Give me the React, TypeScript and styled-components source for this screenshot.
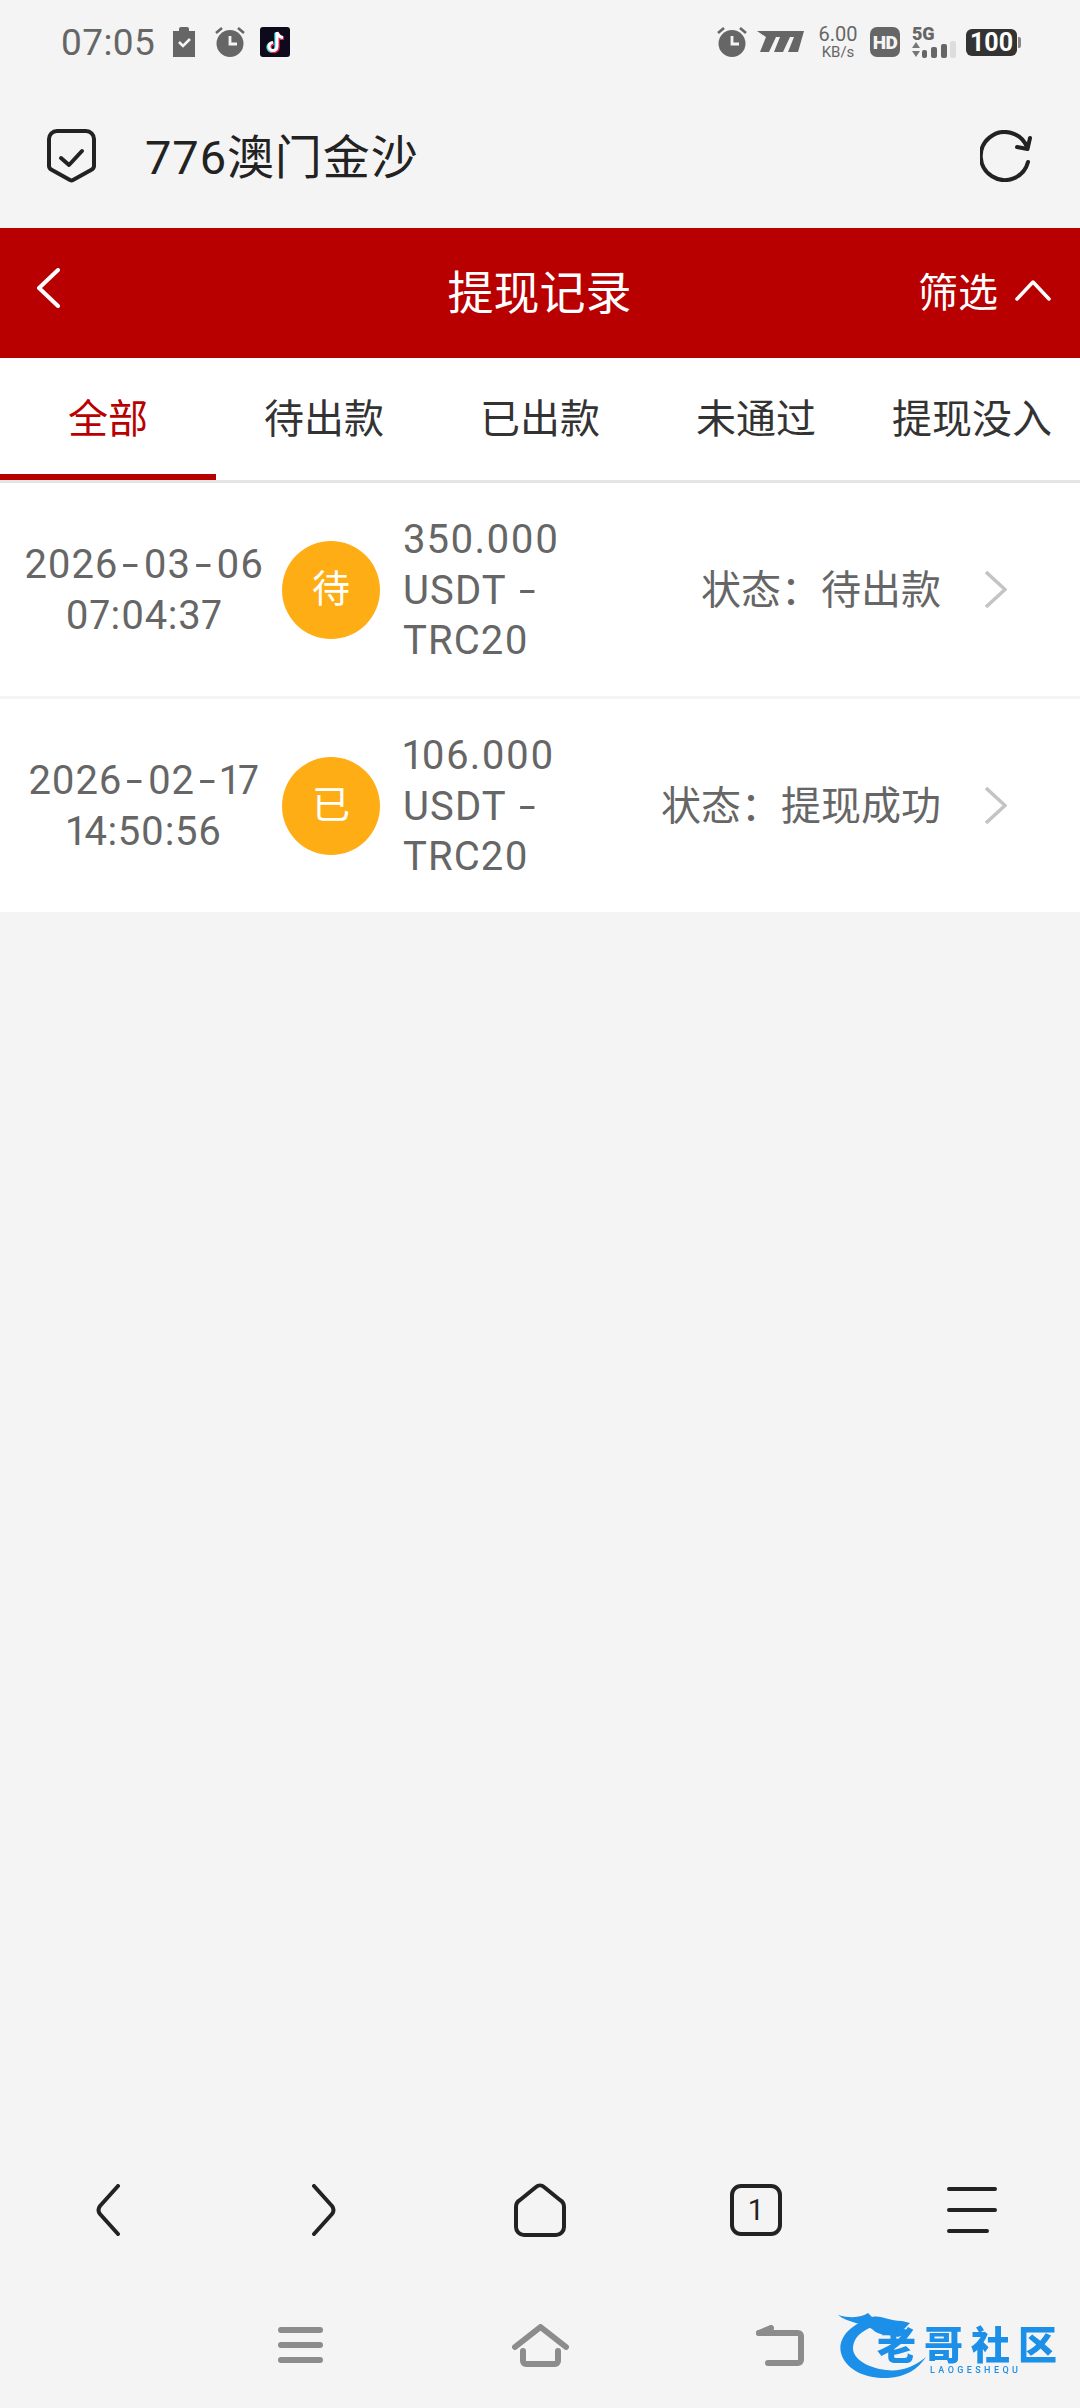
import styled, { createGlobalStyle } from "styled-components";

const GlobalStyle = createGlobalStyle`
  html, body {
    margin: 0;
    padding: 0;
    background: #f4f4f4;
  }
  * {
    box-sizing: border-box;
  }
`;

const FONT = `Roboto, "Noto Sans CJK SC", sans-serif`;
const RED = "#b90000";

const records = [
  { date: "2026-03-06", time: "07:04:37", mark: "待", amount: "350.000", status: "待出款" },
  { date: "2026-02-17", time: "14:50:56", mark: "已", amount: "106.000", status: "提现成功" },
];

const tabs = ["全部", "待出款", "已出款", "未通过", "提现没入"];

const Page = styled.div`
  position: relative;
  width: 1080px;
  height: 2408px;
  display: flex;
  flex-direction: column;
  background: #f4f4f4;
  font-family: ${FONT};
  overflow: hidden;
`;

const StatusBar = styled.div`
  height: 84px;
  padding: 0 59px 0 61px;
  display: flex;
  justify-content: space-between;
  align-items: center;
  color: #666;
`;

const StatusGroup = styled.div`
  display: flex;
  align-items: center;
`;

const Clock = styled.span`
  font-size: 37px;
  width: 112px;
  letter-spacing: 0.4px;
`;

const Speed = styled.div`
  width: 38px;
  margin: 0 13px 0 15px;
  display: flex;
  flex-direction: column;
  align-items: center;
  line-height: 1;
  font-size: 20px;
  color: #666;

  small {
    font-size: 15px;
    margin-top: 1px;
  }
`;

const HdBadge = styled.div`
  width: 30px;
  height: 30px;
  margin-right: 12px;
  border-radius: 7px;
  background: #666;
  color: #f4f4f4;
  font-size: 19px;
  font-weight: 900;
  letter-spacing: -0.5px;
  display: flex;
  align-items: center;
  justify-content: center;
`;

const Network = styled.div`
  width: 44px;
  display: flex;
  flex-direction: column;
  font-size: 18px;
  line-height: 14px;
  font-weight: 900;
  letter-spacing: -0.3px;
  color: #666;
`;

const Battery = styled.div`
  width: 51px;
  height: 27px;
  margin: 0 4px 0 10px;
  border-radius: 6px;
  background: #333;
  color: #fff;
  font-size: 25px;
  font-weight: 700;
  display: flex;
  align-items: center;
  justify-content: center;
  position: relative;

  &::after {
    content: "";
    position: absolute;
    right: -4px;
    top: 8px;
    width: 3px;
    height: 11px;
    background: #888;
    border-radius: 0 2px 2px 0;
  }
`;

const AddressBar = styled.div`
  height: 144px;
  padding: 0 48px 0 47px;
  display: flex;
  align-items: center;
  color: #222;
`;

const SiteName = styled.div`
  flex: 1;
  margin: 2px 0 0 49px;
  font-size: 47px;
  line-height: 1;
  letter-spacing: 0.9px;
`;

const Header = styled.div`
  height: 130px;
  padding: 0 29px 0 28px;
  display: grid;
  grid-template-columns: 1fr auto 1fr;
  align-items: center;
  background: ${RED};
  color: #fff;
`;

const Title = styled.div`
  font-size: 46px;
  margin-bottom: 8px;
`;

const BackButton = styled.div`
  display: flex;
  align-items: center;
  margin: 0 0 10px 8px;
`;

const FilterButton = styled.div`
  display: flex;
  justify-content: flex-end;
  align-items: center;
  gap: 17px;
  font-size: 40px;
  margin-bottom: 6px;
`;

const TabRow = styled.div`
  display: grid;
  grid-template-columns: repeat(5, 216px);
  background: #fff;
  border-bottom: 3px solid #e5e5e5;
`;

const Tab = styled.div<{ $active?: boolean }>`
  height: 122px;
  display: flex;
  align-items: center;
  justify-content: center;
  font-size: 40px;
  color: ${(p) => (p.$active ? RED : "#333")};
  border-bottom: 6px solid ${(p) => (p.$active ? RED : "transparent")};
`;

const Row = styled.div`
  height: 213px;
  padding-right: 73px;
  display: flex;
  align-items: center;
  background: #fff;
  color: #666;
  font-size: 40px;
  line-height: 50.7px;
  font-variant-numeric: proportional-nums;

  & + & {
    margin-top: 3px;
  }
`;

const DateCol = styled.div`
  width: 276px;
  padding: 2px 0 0 12px;
  text-align: center;
  letter-spacing: 0.6px;
  white-space: nowrap;
`;

// the hyphens in the reference run much wider than Roboto's
const Dash = styled.span`
  display: inline-block;
  margin: 0 7px;
  transform: scaleX(1.5);
`;

const CoinDash = styled(Dash)`
  margin: 0 0 0 5px;
`;

const Mark = styled.div`
  width: 98px;
  height: 98px;
  margin: 0 23px 0 6px;
  flex: none;
  border-radius: 50%;
  background: #ffad14;
  color: #fff;
  font-size: 38px;
  display: flex;
  align-items: center;
  justify-content: center;
`;

const AmountCol = styled.div`
  width: 172px;
  padding-top: 3px;
  letter-spacing: 1.1px;
`;

const StatusText = styled.div`
  flex: 1;
  padding-top: 3px;
  margin-right: 44px;
  text-align: right;
`;

const Spacer = styled.div`
  flex: 1;
`;

const BrowserNav = styled.div`
  height: 96px;
  margin-bottom: 55px;
  display: grid;
  grid-template-columns: repeat(5, 216px);
  align-items: center;
  justify-items: center;
  color: #222;
`;

const TabCount = styled.div`
  width: 52px;
  height: 52px;
  border: 4px solid #222;
  border-radius: 11px;
  font-size: 29px;
  color: #222;
  display: flex;
  align-items: center;
  justify-content: center;
`;

const SystemNav = styled.div`
  height: 64px;
  margin-bottom: 31px;
  padding: 0 180px;
  display: grid;
  grid-template-columns: repeat(3, 240px);
  align-items: center;
  justify-items: center;
  color: #8c8c8c;
`;

const Watermark = styled.div`
  position: absolute;
  left: 838px;
  top: 2307px;
  width: 222px;
  height: 71px;
  color: #1c8fe8;
  filter: blur(0.4px);

  svg {
    position: absolute;
    left: 0;
    top: 0;
  }
`;

const WatermarkName = styled.div`
  position: absolute;
  left: 39px;
  top: 21px;
  font-size: 39px;
  line-height: 37px;
  font-weight: 900;
  letter-spacing: 8px;
  white-space: nowrap;
`;

const WatermarkSub = styled.div`
  position: absolute;
  left: 92px;
  top: 58px;
  font-size: 9px;
  line-height: 10px;
  letter-spacing: 3.4px;
  font-weight: 500;
  white-space: nowrap;
`;

const ClipboardIcon = () => (
  <svg width="22" height="30" viewBox="0 0 22 30" style={{ marginRight: 20 }}>
    <path d="M0 4h6V2a2 2 0 0 1 2-2h6a2 2 0 0 1 2 2v2h6v26H0z" fill="#666" />
    <path d="M6 15l4 4 7-7" fill="none" stroke="#f4f4f4" strokeWidth="2.6" />
  </svg>
);

const AlarmIcon = () => (
  <svg width="30" height="30" viewBox="0 0 30 30">
    <circle cx="15" cy="16.500" r="13.500" fill="#666" />
    <path d="M1 6l6-5M29 6l-6-5" stroke="#666" strokeWidth="2.600" />
    <path d="M15 9v8h7" fill="none" stroke="#f4f4f4" strokeWidth="2.800" />
  </svg>
);

const TiktokIcon = () => (
  <svg width="30" height="30" viewBox="0 0 30 30" style={{ marginLeft: 15 }}>
    <rect width="30" height="30" rx="3" fill="#0e0a1c" />
    <path d="M17 5v14.500a4 4 0 1 1-4-4M17 5c.5 3 3 5 6 5.500" fill="none" stroke="#2be0e4" strokeWidth="3.400" transform="translate(-1 .8)" />
    <path d="M17 5v14.500a4 4 0 1 1-4-4M17 5c.5 3 3 5 6 5.500" fill="none" stroke="#f0244f" strokeWidth="3.400" transform="translate(1 1)" />
    <path d="M17 5v14.500a4 4 0 1 1-4-4M17 5c.5 3 3 5 6 5.500" fill="none" stroke="#fff" strokeWidth="3" />
  </svg>
);

const CarrierIcon = () => (
  <svg width="47" height="22" viewBox="0 0 47 22" style={{ marginLeft: 10 }}>
    <path d="M0 0h47l-6 21H31l6-15h-4l-7 15h-9l6-15h-4l-7 15H3l6-15z" fill="#666" />
  </svg>
);

const SignalIcon = () => (
  <svg width="44" height="17" viewBox="0 0 44 17">
    <path d="M4 1l4 6H0zM0 10h8l-4 6z" fill="#777" />
    <rect x="10" y="9" width="5" height="8" rx="2" fill="#666" />
    <rect x="19" y="6" width="6" height="11" rx="2" fill="#666" />
    <rect x="29" y="3" width="6" height="14" rx="2" fill="#666" />
    <rect x="38" y="0" width="6" height="17" rx="2" fill="#ddd" />
  </svg>
);

const ShieldIcon = () => (
  <svg width="49" height="54" viewBox="0 0 49 54" fill="none" stroke="#222" strokeWidth="4" strokeLinejoin="round" strokeLinecap="round">
    <path d="M10 2h29a8 8 0 0 1 8 8v27c0 2-1 3-3 4L26 51a3 3 0 0 1-3 0L5 41c-2-1-3-2-3-4V10a8 8 0 0 1 8-8z" />
    <path d="M14 29l8 7 13-14" />
  </svg>
);

const RefreshIcon = () => (
  <svg width="52" height="52" viewBox="0 0 52 52" fill="none" stroke="#222" strokeWidth="4" strokeLinecap="round" strokeLinejoin="round">
    <path d="M48 32A24 24 0 1 1 47 17" />
    <path d="M50 8l-2.500 11L37 17" />
  </svg>
);

const BackIcon = () => (
  <svg width="24" height="40" viewBox="0 0 24 40" fill="none" stroke="#fff" strokeWidth="4" strokeLinecap="round" strokeLinejoin="round">
    <path d="M22 2L3 20l19 18" />
  </svg>
);

const UpIcon = () => (
  <svg width="36" height="21" viewBox="0 0 36 21" fill="none" stroke="#fff" strokeWidth="3.500" strokeLinecap="round" strokeLinejoin="round">
    <path d="M2 19L18 2l16 17" />
  </svg>
);

const RowArrow = () => (
  <svg width="22" height="37" viewBox="0 0 22 37" fill="none" stroke="#c4c4c4" strokeWidth="3.500">
    <path d="M1 1l19 17.500L1 36" />
  </svg>
);

const NavPrev = () => (
  <svg width="24" height="52" viewBox="0 0 24 52" fill="none" stroke="#222" strokeWidth="4" strokeLinecap="round" strokeLinejoin="round">
    <path d="M22 2L4 22q-3 4 0 8l18 20" />
  </svg>
);

const NavNext = () => (
  <svg width="24" height="52" viewBox="0 0 24 52" fill="none" stroke="#222" strokeWidth="4" strokeLinecap="round" strokeLinejoin="round">
    <path d="M2 2l18 20q3 4 0 8L2 50" />
  </svg>
);

const NavHome = () => (
  <svg width="52" height="54" viewBox="0 0 52 54" fill="none" stroke="#222" strokeWidth="4" strokeLinejoin="round">
    <path d="M22 4a6 6 0 0 1 8 0l16 13a8 8 0 0 1 4 7v20a8 8 0 0 1-8 8H10a8 8 0 0 1-8-8V24a8 8 0 0 1 4-7z" />
  </svg>
);

const NavMenu = () => (
  <svg width="50" height="46" viewBox="0 0 50 46" fill="none" stroke="#222" strokeWidth="4" strokeLinecap="round">
    <path d="M2 2h46M2 23h46M2 44h38" />
  </svg>
);

const SysMenu = () => (
  <svg width="45" height="36" viewBox="0 0 45 36" fill="none" stroke="#8c8c8c" strokeWidth="6" strokeLinecap="round">
    <path d="M3 3h39M3 18h39M3 33h39" />
  </svg>
);

const SysHome = () => (
  <svg width="57" height="43" viewBox="0 0 57 43" fill="none" stroke="#8c8c8c" strokeWidth="6" strokeLinecap="round" strokeLinejoin="round">
    <path d="M3 23L28.500 3 54 23" />
    <path d="M11 27v10a3 3 0 0 0 3 3h29a3 3 0 0 0 3-3V27" />
  </svg>
);

const SysBack = () => (
  <svg width="48" height="41" viewBox="0 0 48 41" fill="none" stroke="#8c8c8c" strokeWidth="6" strokeLinecap="round" strokeLinejoin="round">
    <path d="M3 8h39a3 3 0 0 1 3 3v24a3 3 0 0 1-3 3H12" />
    <path d="M3 8l12-5" />
  </svg>
);

const DragonLogo = () => (
  <svg width="222" height="71" viewBox="0 0 222 71" fill="#1c8fe8">
    <path d="M30 12C8 20 0 34 3 46c5 18 27 26 47 25 18-1 30-9 38-21-12 10-26 15-40 13-18-2-34-11-33-23 1-10 9-16 19-20z" />
    <path d="M0 8c14 4 24 2 30-2l4 4c10-2 16 4 30 4l8 2-6 6 8 2-14 6c-12-4-18 0-26-8C24 16 10 16 0 8z" />
  </svg>
);

const splitDate = (date: string) =>
  date.split("-").map((part, i) => (
    <span key={part + i}>
      {i > 0 && <Dash>-</Dash>}
      {part}
    </span>
  ));

export default function App() {
  return (
    <Page>
      <GlobalStyle />
      <StatusBar>
        <StatusGroup>
          <Clock>07:05</Clock>
          <ClipboardIcon />
          <AlarmIcon />
          <TiktokIcon />
        </StatusGroup>
        <StatusGroup>
          <AlarmIcon />
          <CarrierIcon />
          <Speed>
            6.00
            <small>KB/s</small>
          </Speed>
          <HdBadge>HD</HdBadge>
          <Network>
            5G
            <SignalIcon />
          </Network>
          <Battery>100</Battery>
        </StatusGroup>
      </StatusBar>

      <AddressBar>
        <ShieldIcon />
        <SiteName>776澳门金沙</SiteName>
        <RefreshIcon />
      </AddressBar>

      <Header>
        <BackButton>
          <BackIcon />
        </BackButton>
        <Title>提现记录</Title>
        <FilterButton>
          筛选
          <UpIcon />
        </FilterButton>
      </Header>

      <TabRow>
        {tabs.map((t, i) => (
          <Tab key={t} $active={i === 0}>
            {t}
          </Tab>
        ))}
      </TabRow>

      {records.map((r) => (
        <Row key={r.date}>
          <DateCol>
            {splitDate(r.date)}
            <br />
            {r.time}
          </DateCol>
          <Mark>{r.mark}</Mark>
          <AmountCol>
            {r.amount} USDT <CoinDash>-</CoinDash> TRC20
          </AmountCol>
          <StatusText>状态：{r.status}</StatusText>
          <RowArrow />
        </Row>
      ))}

      <Spacer />

      <BrowserNav>
        <NavPrev />
        <NavNext />
        <NavHome />
        <TabCount>1</TabCount>
        <NavMenu />
      </BrowserNav>

      <SystemNav>
        <SysMenu />
        <SysHome />
        <SysBack />
      </SystemNav>

      <Watermark>
        <DragonLogo />
        <WatermarkName>老哥社区</WatermarkName>
        <WatermarkSub>LAOGESHEQU</WatermarkSub>
      </Watermark>
    </Page>
  );
}
